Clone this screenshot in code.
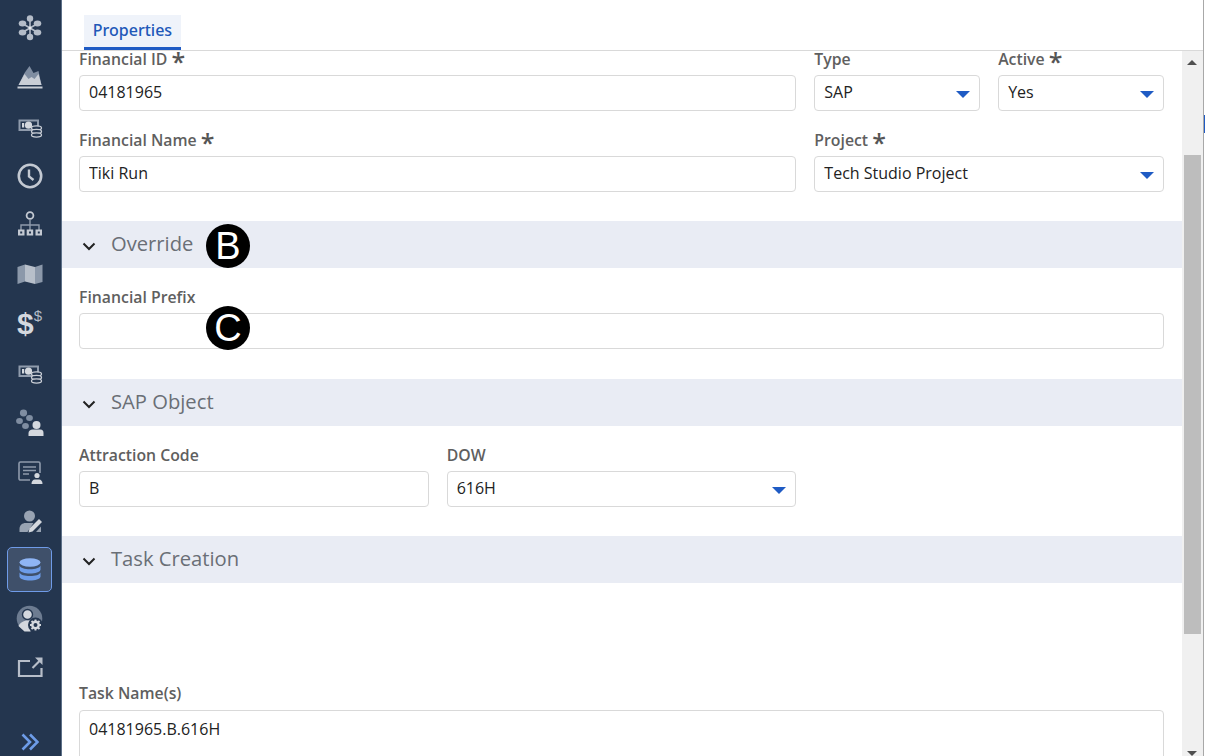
<script>
</script>

<div class="page">
	<nav class="rail">
		<a class="nav-item" href="#a">
			<svg viewBox="0 0 32 32">
				<g stroke="#b4bcc8" stroke-width="1.600"><path d="M16 16V6M16 16v10M16 16 7.500 11M16 16l8.500-5M16 16l-8.500 5M16 16l8.500 5" /></g>
				<g fill="#b4bcc8"><circle cx="16" cy="6.500" r="3.200" /><circle cx="16" cy="25" r="3.200" /><ellipse cx="8.500" cy="11.500" rx="3.800" ry="3" /><ellipse cx="23.500" cy="11.500" rx="3.800" ry="3" /><ellipse cx="8.500" cy="20.500" rx="3.800" ry="3" /><ellipse cx="23.500" cy="20.500" rx="3.800" ry="3" /></g>
				<circle cx="16" cy="16" r="1.500" fill="#e8ebef" />
			</svg>
		</a>
		<a class="nav-item" href="#a">
			<svg viewBox="0 0 32 32">
				<path d="M4.500 24 10.500 12l5-7 4 7 5-2 3 14z" fill="#7f8da1" />
				<path d="M4.500 24 10.500 13l4 5 3-2 3 2 4-5 3 11z" fill="#c9ced6" />
				<path d="M3.500 25.500h25v2h-25z" fill="#c9ced6" />
			</svg>
		</a>
		<a class="nav-item" href="#a">
			<svg viewBox="0 0 32 32">
				<path d="M4.500 8.500H25V20H4.500z" fill="#8f9bac" />
				<path d="M6.500 10.500H23v7.500H6.500z" fill="#24364f" />
				<circle cx="14.500" cy="14.200" r="3.600" fill="#d4d8de" />
				<path d="M8 12h2.200v4.500H8z" fill="#d4d8de" />
				<g fill="#24364f" stroke="#c9ced6" stroke-width="1.300"><ellipse cx="22.500" cy="17" rx="5" ry="2.100" /><ellipse cx="22.500" cy="20.500" rx="5" ry="2.100" /><ellipse cx="22.500" cy="24" rx="5" ry="2.100" /></g>
			</svg>
		</a>
		<a class="nav-item" href="#a">
			<svg viewBox="0 0 32 32">
				<circle cx="16" cy="16" r="11.200" fill="none" stroke="#c3c9d2" stroke-width="2.600" />
				<path d="M15 9.500v7l4.500 3.500" fill="none" stroke="#c3c9d2" stroke-width="2.400" />
			</svg>
		</a>
		<a class="nav-item" href="#a">
			<svg viewBox="0 0 32 32">
				<circle cx="16" cy="6.500" r="3.400" fill="none" stroke="#c3c9d2" stroke-width="1.800" />
				<path d="M16 10v11M7 21v-5h18v5" fill="none" stroke="#8f9bac" stroke-width="1.400" />
				<g fill="#c3c9d2"><path d="M4 20.500h6.500v6H4zM12.700 20.500h6.500v6h-6.500zM21.500 20.500H28v6h-6.500z" /></g>
				<g fill="#24364f"><path d="M6.200 22.500h2v2h-2zM15 22.500h2v2h-2zM23.800 22.500h2v2h-2z" /></g>
			</svg>
		</a>
		<a class="nav-item" href="#a">
			<svg viewBox="0 0 32 32">
				<path d="M3.500 9 11 6.500v17L3.500 26z" fill="#8b98aa" />
				<path d="M11 6.500 21 9v17l-10-2.500z" fill="#b7bfca" />
				<path d="M21 9l7.500-2.500V24L21 26z" fill="#8b98aa" />
			</svg>
		</a>
		<a class="nav-item dollar" href="#a"><span class="big">$</span><span class="small">$</span></a>
		<a class="nav-item" href="#a">
			<svg viewBox="0 0 32 32">
				<path d="M4.500 8.500H25V20H4.500z" fill="#8f9bac" />
				<path d="M6.500 10.500H23v7.500H6.500z" fill="#24364f" />
				<circle cx="14.500" cy="14.200" r="3.600" fill="#d4d8de" />
				<path d="M8 12h2.200v4.500H8z" fill="#d4d8de" />
				<g fill="#24364f" stroke="#c9ced6" stroke-width="1.300"><ellipse cx="22.500" cy="17" rx="5" ry="2.100" /><ellipse cx="22.500" cy="20.500" rx="5" ry="2.100" /><ellipse cx="22.500" cy="24" rx="5" ry="2.100" /></g>
			</svg>
		</a>
		<a class="nav-item" href="#a">
			<svg viewBox="0 0 32 32">
				<g fill="#7f8da1"><ellipse cx="9.500" cy="7" rx="3.600" ry="3.400" /><ellipse cx="15.500" cy="12" rx="3.400" ry="3" /><ellipse cx="5.500" cy="15" rx="3.400" ry="3" /><ellipse cx="11.500" cy="20" rx="3.400" ry="3" /></g>
				<circle cx="22.500" cy="19" r="4" fill="#d4d8de" />
				<path d="M14.500 30v-3c0-2 2-3.500 4-3.500h8c2 0 3 1.500 3 3.500v3z" fill="#d4d8de" />
			</svg>
		</a>
		<a class="nav-item" href="#a">
			<svg viewBox="0 0 32 32">
				<path d="M16 25H6.500A1.500 1.500 0 0 1 5 23.500V8.500A1.500 1.500 0 0 1 6.500 7h18A1.500 1.500 0 0 1 26 8.500V18" fill="none" stroke="#8f9bac" stroke-width="1.600" />
				<path d="M9 12h13M9 15.500h13M9 19h6" stroke="#8f9bac" stroke-width="1.600" />
				<circle cx="23" cy="20.500" r="2.600" fill="#d4d8de" />
				<path d="M17.500 29c0-3 1.500-4.500 3.500-4.500h4c2 0 3.500 1.500 3.500 4.500z" fill="#d4d8de" />
			</svg>
		</a>
		<a class="nav-item" href="#a">
			<svg viewBox="0 0 32 32">
				<circle cx="15.500" cy="11" r="5.500" fill="#98a3b2" />
				<path d="M5.500 27v-3c0-4 3-6 6-6h8l-6 9z" fill="#98a3b2" />
				<path d="M14.500 27.500l1-4L25 14l3 3-9.500 9.500z" fill="#d4d8de" />
				<path d="M22 27l5-5.500V27z" fill="#98a3b2" />
			</svg>
		</a>
		<a class="nav-item active" href="#a">
			<svg viewBox="0 0 32 32">
				<ellipse cx="16" cy="8.500" rx="10.500" ry="4.200" fill="#8fb5f5" />
				<path d="M5.500 11.500c1 2.500 5 3.800 10.500 3.800s9.500-1.300 10.500-3.800v4.300c-1 2.500-5 3.700-10.500 3.700s-9.500-1.200-10.500-3.700z" fill="#6d9ce8" />
				<path d="M5.500 18.500c1 2.500 5 3.500 10.500 3.500s9.500-1 10.500-3.500v4.300c-1 2.500-5 3.700-10.500 3.700s-9.500-1.200-10.500-3.700z" fill="#6d9ce8" />
			</svg>
		</a>
		<a class="nav-item" href="#a">
			<svg viewBox="0 0 32 32">
				<circle cx="15.500" cy="15.500" r="12.800" fill="#6d7c91" />
				<circle cx="13.500" cy="11.500" r="5" fill="#d4d8de" stroke="#24364f" stroke-width="1.400" />
				<path d="M4.500 23c1-3 5-5.500 9-5.500h4l-1 11h-6z" fill="#d4d8de" />
				<circle cx="21.500" cy="22" r="7.500" fill="#24364f" />
				<circle cx="21.500" cy="22" r="3.200" fill="none" stroke="#d4d8de" stroke-width="2.400" />
				<path d="M21.500 16.500v2M21.500 25.500v2M16 22h2M25 22h2M17.500 18l1.500 1.500M24 24.500l1.500 1.500M25.500 18 24 19.500M19 24.500 17.500 26" stroke="#d4d8de" stroke-width="1.900" />
			</svg>
		</a>
		<a class="nav-item" href="#a">
			<svg viewBox="0 0 32 32">
				<path d="M16 9H5v15h22.500v-8" fill="none" stroke="#b7bec9" stroke-width="2.200" />
				<path d="M18.500 16 26 8.500" stroke="#b7bec9" stroke-width="2.200" />
				<path d="M21 5.500h7.500V13z" fill="#b7bec9" />
			</svg>
		</a>
		<button class="expand" aria-label="Expand">
			<svg viewBox="0 0 18 18" width="18" height="18">
				<path d="M1.500 1.500 9 9l-7.500 7.500M9 1.500 16.500 9 9 16.500" fill="none" stroke="#6d9ce8" stroke-width="2.600" />
			</svg>
		</button>
	</nav>

	<main class="main">
		<header class="tabs">
			<div class="tab">Properties</div>
		</header>
		<div class="body">
			<div class="scroll">
				<section class="grid">
					<div class="field span4">
						<label for="fid">Financial ID <i>*</i></label>
						<input id="fid" value="04181965" readonly />
					</div>
					<div class="field">
						<label for="ftype">Type</label>
						<div id="ftype" class="select">SAP<span class="caret"></span></div>
					</div>
					<div class="field">
						<label for="fact">Active <i>*</i></label>
						<div id="fact" class="select">Yes<span class="caret"></span></div>
					</div>
					<div class="field span4">
						<label for="fname">Financial Name <i>*</i></label>
						<input id="fname" value="Tiki Run" readonly />
					</div>
					<div class="field span2">
						<label for="fproj">Project <i>*</i></label>
						<div id="fproj" class="select">Tech Studio Project<span class="caret"></span></div>
					</div>
				</section>

				<h2 class="head tight">
					<svg class="chev" viewBox="0 0 14 9" width="14" height="9"><path d="M1.500 1.500 7 7l5.500-5.500" fill="none" stroke="#222" stroke-width="2" /></svg>
					Override
				</h2>
				<section class="grid">
					<div class="field span6">
						<label for="fpre">Financial Prefix</label>
						<input id="fpre" value="" readonly />
					</div>
				</section>

				<h2 class="head">
					<svg class="chev" viewBox="0 0 14 9" width="14" height="9"><path d="M1.500 1.500 7 7l5.500-5.500" fill="none" stroke="#222" stroke-width="2" /></svg>
					SAP Object
				</h2>
				<section class="grid">
					<div class="field span2">
						<label for="fcode">Attraction Code</label>
						<input id="fcode" value="B" readonly />
					</div>
					<div class="field span2">
						<label for="fdow">DOW</label>
						<div id="fdow" class="select">616H<span class="caret"></span></div>
					</div>
				</section>

				<h2 class="head tight">
					<svg class="chev" viewBox="0 0 14 9" width="14" height="9"><path d="M1.500 1.500 7 7l5.500-5.500" fill="none" stroke="#222" stroke-width="2" /></svg>
					Task Creation
				</h2>
				<section class="grid task">
					<div class="field span6">
						<label for="ftask">Task Name(s)</label>
						<div id="ftask" class="area">04181965.B.616H</div>
					</div>
				</section>

				<span class="marker b">B</span>
				<span class="marker c">C</span>
			</div>
			<div class="scrollbar">
				<span class="arrow up"></span>
				<span class="thumb"></span>
				<span class="arrow down"></span>
			</div>
		</div>
	</main>
	<div class="edge"><span class="peek"></span></div>
</div>

<style>
	:global(body) {
		margin: 0;
		overflow: hidden;
		background: #fff;
	}

	.page {
		display: flex;
		height: 756px;
		font-family: 'Open Sans', 'Noto Sans', sans-serif;
		font-size: 16px;
		color: #222;
		overflow: hidden;
	}

	.rail {
		flex: 0 0 62px;
		height: 756px;
		box-sizing: border-box;
		background: #24364f;
		border-right: 1px solid #5d7088;
		display: flex;
		flex-direction: column;
		padding-top: 5.500px;
	}

	.nav-item {
		flex: 0 0 45px;
		width: 45px;
		margin: 0 0 4.250px 7px;
		display: flex;
		align-items: center;
		justify-content: center;
		box-sizing: border-box;
		border-radius: 5px;
		text-decoration: none;
	}

	.nav-item svg {
		width: 32px;
		height: 32px;
	}

	.nav-item.active {
		background: #3f506a;
		border: 1px solid #6f9be8;
	}

	.dollar {
		font-family: 'Liberation Sans', sans-serif;
		color: #d4d8de;
		align-items: flex-start;
	}

	.dollar .big {
		font-size: 30px;
		font-weight: 700;
		line-height: 45px;
	}

	.dollar .small {
		font-size: 15px;
		line-height: 30px;
		color: #b4bcc8;
	}

	.expand {
		margin: auto 0 5px 21px;
		padding: 0;
		width: 18px;
		height: 18px;
		border: 0;
		background: none;
		display: block;
	}

	.main {
		flex: 0 0 1141px;
		display: flex;
		flex-direction: column;
		height: 756px;
	}

	.tabs {
		flex: 0 0 51px;
		box-sizing: border-box;
		border-bottom: 1px solid #d9d9d9;
		padding: 15px 0 0 22px;
	}

	.tab {
		width: 97px;
		height: 35px;
		box-sizing: border-box;
		background: #eff3fa;
		border-bottom: 3px solid #1f5bc4;
		color: #2158b8;
		font-family: 'Noto Sans', sans-serif;
		font-weight: 500;
		text-align: center;
		line-height: 31px;
	}

	.body {
		flex: 1;
		display: flex;
		min-height: 0;
	}

	.scroll {
		flex: 1;
		position: relative;
		overflow: hidden;
	}

	.grid {
		display: grid;
		grid-template-columns: repeat(6, 1fr);
		gap: 21px 18px;
		padding: 0 18px 0 17px;
	}

	.head + .grid {
		padding-top: 21px;
	}

	.field {
		min-width: 0;
	}

	.span2 {
		grid-column: span 2;
	}

	.span4 {
		grid-column: span 4;
	}

	.span6 {
		grid-column: span 6;
	}

	label {
		display: block;
		height: 24px;
		line-height: 16px;
		font-weight: 600;
		font-size: 15.800px;
		color: #5f5f5f;
	}

	label i {
		font-style: normal;
		font-size: 25px;
		line-height: 14px;
		vertical-align: -6px;
		color: #555;
	}

	input,
	.select,
	.area {
		display: block;
		width: 100%;
		height: 36px;
		box-sizing: border-box;
		border: 1px solid #d9d9d9;
		border-radius: 4px;
		padding: 0 9px;
		background: #fff;
		font: inherit;
		line-height: 33px;
		color: #222;
		outline: none;
	}

	input {
		padding-bottom: 2px;
	}

	.select {
		position: relative;
	}

	.area {
		height: 120px;
		line-height: 37px;
	}

	.caret {
		position: absolute;
		right: 9px;
		top: 15px;
		width: 0;
		height: 0;
		border-left: 7px solid transparent;
		border-right: 7px solid transparent;
		border-top: 7px solid #1f5bc4;
	}

	.head {
		margin: 30px 0 0;
		height: 47px;
		box-sizing: border-box;
		display: flex;
		align-items: center;
		gap: 15px;
		padding: 0 0 4px 20px;
		background: #e9ecf4;
		font-size: 20.200px;
		font-weight: 400;
		color: #6a6f76;
	}

	.head.tight {
		margin-top: 29px;
	}

	.chev {
		flex: none;
		margin-top: 7px;
	}

	.head + .grid.task {
		padding-top: 102px;
	}

	.task label {
		height: 25px;
	}

	.marker {
		position: absolute;
		left: 144px;
		width: 44px;
		height: 44px;
		border-radius: 50%;
		background: #000;
		color: #fff;
		font-family: 'Liberation Sans', sans-serif;
		font-size: 38px;
		line-height: 44px;
		text-align: center;
	}

	.marker.b {
		top: 173px;
	}

	.marker.c {
		top: 255px;
	}

	.scrollbar {
		flex: 0 0 21px;
		background: #f0f0f0;
		position: relative;
		box-sizing: border-box;
		padding: 104px 2px 0;
	}

	.thumb {
		display: block;
		height: 479px;
		background: #bdbdbd;
	}

	.arrow {
		position: absolute;
		left: 5px;
		width: 0;
		height: 0;
		border-left: 5px solid transparent;
		border-right: 5px solid transparent;
	}

	.arrow.up {
		top: 9px;
		border-bottom: 5px solid #505050;
	}

	.arrow.down {
		bottom: 0;
		border-top: 5px solid #505050;
	}

	.edge {
		flex: 0 0 2px;
		position: relative;
		background: #fff;
		border-left: 1px solid #a8a8a8;
		box-sizing: border-box;
	}

	.peek {
		position: absolute;
		top: 115px;
		left: 0;
		width: 1px;
		height: 18px;
		background: #1f5bc4;
	}
</style>
